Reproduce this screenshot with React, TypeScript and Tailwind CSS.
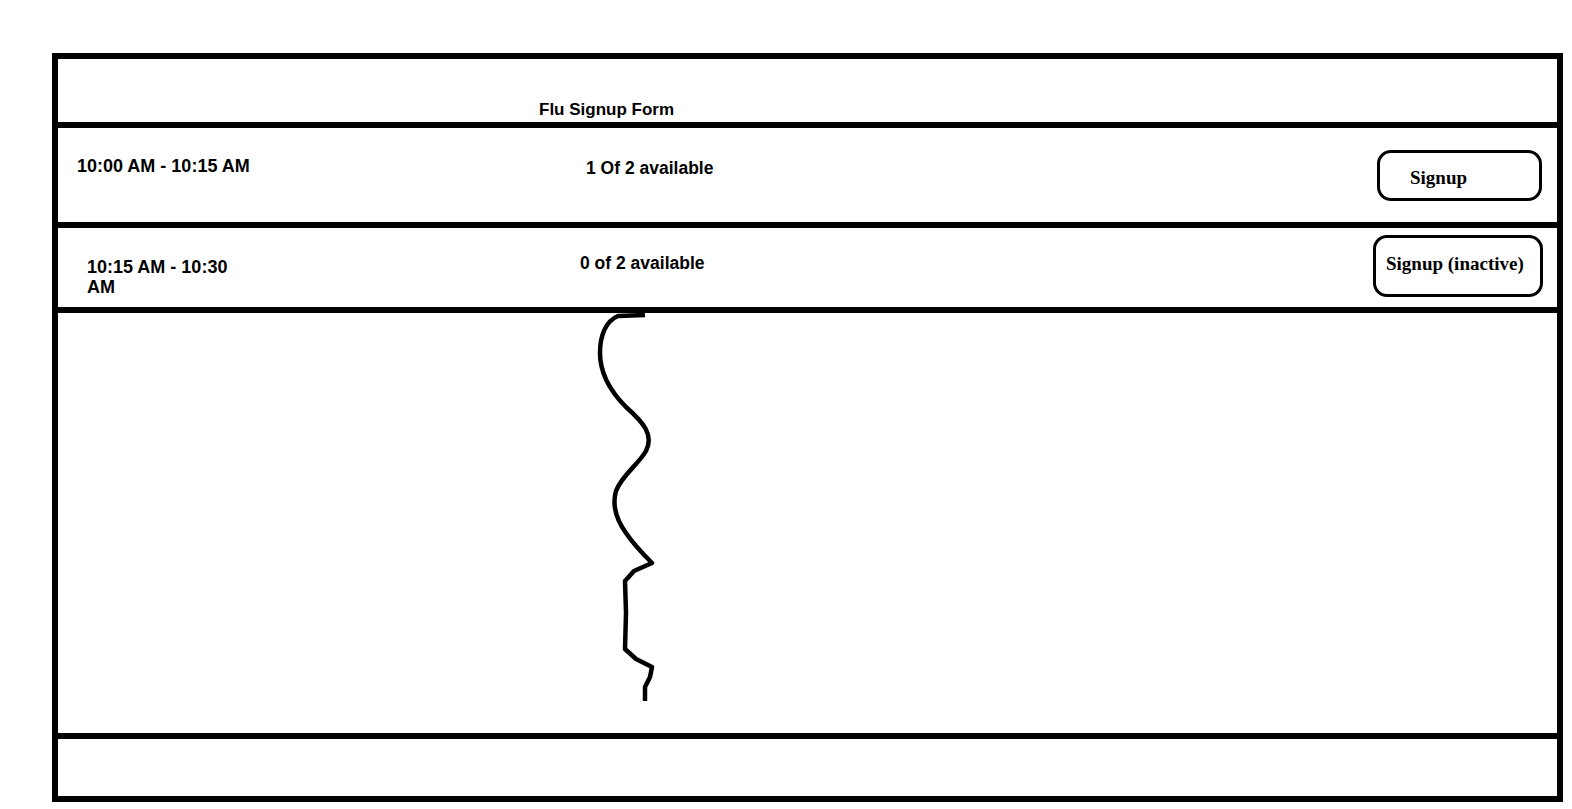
import React from "react";

const sans = "font-['Liberation_Sans',Arial,sans-serif]";
const serif = "font-['Liberation_Serif','Times_New_Roman',serif]";

function SlotButton({ label, className }: { label: string; className: string }) {
  return (
    <button
      className={`border-[3.5px] border-black rounded-[14px] bg-white text-black font-bold text-[19px] leading-[22px] ${serif} ${className}`}
    >
      {label}
    </button>
  );
}

export default function App() {
  return (
    <div className="min-h-screen bg-white pl-[52px] pt-[53px]">
      <div className="w-[1511px] h-[749px] border-[6px] border-black flex flex-col text-black">
        {/* Header */}
        <header className="h-[69px] shrink-0 border-b-[6px] border-black pl-[481px] pt-[41px]">
          <h1 className={`text-[17px] leading-[20px] font-bold ${sans}`}>Flu Signup Form</h1>
        </header>

        {/* Slot 1 */}
        <div className="h-[100px] shrink-0 border-b-[6px] border-black flex items-start">
          <div className={`w-[510px] pl-[19px] pt-[28px] text-[18px] leading-[20px] font-bold ${sans}`}>
            10:00 AM - 10:15 AM
          </div>
          <div className={`flex-1 pt-[30px] pl-[18px] text-[17.5px] leading-[20px] font-bold ${sans}`}>
            1 Of 2 available
          </div>
          <SlotButton
            label="Signup"
            className="mt-[22px] mr-[15px] w-[165px] h-[51px] flex items-center pl-[30px] pt-[4px]"
          />
        </div>

        {/* Slot 2 */}
        <div className="h-[85px] shrink-0 border-b-[6px] border-black flex items-start">
          <div className="w-[522px] pl-[29px] pt-[29px]">
            <div className={`w-[160px] text-[18px] leading-[20px] font-bold ${sans}`}>
              10:15 AM - 10:30 AM
            </div>
          </div>
          <div className={`flex-1 pt-[25px] text-[17.5px] leading-[20px] font-bold ${sans}`}>
            0 of 2 available
          </div>
          <SlotButton
            label="Signup (inactive)"
            className="mt-[7px] mr-[14px] w-[170px] h-[62px] flex items-start pl-[10px] pt-[15px]"
          />
        </div>

        {/* Body */}
        <div className="relative h-[426px] shrink-0 border-b-[6px] border-black">
          <svg
            className="absolute left-[530px] top-0"
            width="80"
            height="400"
            viewBox="0 0 80 400"
            fill="none"
          >
            <path
              d="M57 2 L30 3 C18 8 12 22 12 40 C12 60 22 78 38 94 C56 110 66 122 58 138 C50 152 34 162 28 178 C24 192 28 206 38 220 C46 232 56 242 64 250 L46 258 L37 268 L38 300 L37 336 L48 346 L64 354 L62 364 L57 374 L57 388"
              stroke="black"
              strokeWidth="4.5"
              strokeLinejoin="round"
            />
          </svg>
        </div>

        {/* Footer */}
        <footer className="flex-1" />
      </div>
    </div>
  );
}
